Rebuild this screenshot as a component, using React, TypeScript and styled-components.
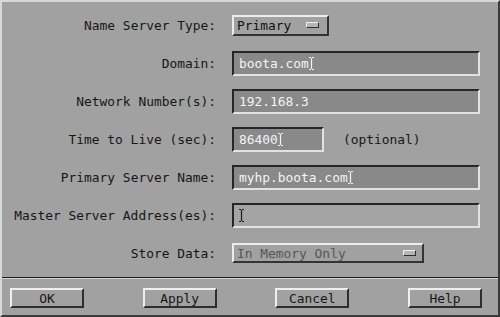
import React from 'react';
import styled, { createGlobalStyle } from 'styled-components';
import type { ReactElement } from 'react';

const GlobalStyle = createGlobalStyle`
  html, body {
    margin: 0;
    padding: 0;
    background: #a1a1a1;
  }
`;

const Window = styled.div`
  box-sizing: border-box;
  width: 500px;
  height: 317px;
  display: flex;
  flex-direction: column;
  background: #a1a1a1;
  border: 2px solid;
  border-color: #d8d8d8 #3a3a3a #3a3a3a #d8d8d8;
  font-family: 'DejaVu Sans Mono', 'Liberation Mono', monospace;
  font-size: 12.9px;
  color: #161616;
`;

const Form = styled.div`
  display: grid;
  grid-template-columns: 208px 1fr;
  grid-auto-rows: 38px;
  column-gap: 16px;
  align-items: center;
  padding: 4px 18px 0 6px;
`;

const Label = styled.div`
  text-align: right;
  white-space: pre;
`;

const FieldCell = styled.div`
  display: flex;
  align-items: center;
  gap: 19px;
`;

const TextField = styled.div<{ $width?: number; $empty?: boolean }>`
  box-sizing: border-box;
  height: 25px;
  width: ${(p) => (p.$width ? `${p.$width}px` : '100%')};
  display: flex;
  align-items: center;
  padding: 0 5px;
  background: ${(p) => (p.$empty ? '#a4a4a4' : '#898989')};
  color: #f4f4f4;
  border: 2px solid;
  border-color: #262626 #e2e2e2 #e2e2e2 #262626;
  white-space: pre;
`;

const Hint = styled.span`
  white-space: pre;
`;

const OptionMenu = styled.div<{ $width: number; $height: number; $disabled?: boolean }>`
  box-sizing: border-box;
  width: ${(p) => p.$width}px;
  height: ${(p) => p.$height}px;
  display: flex;
  align-items: center;
  justify-content: space-between;
  padding: 0 ${(p) => (p.$disabled ? 6 : 8)}px 0 3px;
  border: 2px solid;
  border-color: #ececec #333333 #333333 #ececec;
  color: ${(p) => (p.$disabled ? '#565656' : '#111111')};
  white-space: pre;
`;

const Indicator = styled.span`
  box-sizing: border-box;
  width: 13px;
  height: 6px;
  background: #b4b4b4;
  border: 1px solid;
  border-color: #f0f0f0 #2e2e2e #2e2e2e #f0f0f0;
`;

const Separator = styled.div`
  margin: 5px 0 0;
  height: 1px;
  background: #1e1e1e;
  border-bottom: 1px solid #d4d4d4;
`;

const ButtonRow = styled.div`
  display: flex;
  justify-content: space-between;
  padding: 9px 16px 0 8px;
`;

const Button = styled.div`
  box-sizing: border-box;
  width: 74px;
  height: 20px;
  display: flex;
  align-items: center;
  justify-content: center;
  border: 2px solid;
  border-color: #efefef #2e2e2e #2e2e2e #efefef;
`;

const Caret = ({ color }: { color: string }): ReactElement => (
  <svg width="5" height="13" viewBox="0 0 5 13">
    <path d="M0 0.5h2M3 0.5h2M2.5 1v11M0 12.5h2M3 12.5h2" stroke={color} strokeWidth="1.2" fill="none" />
  </svg>
);

const App = (): ReactElement => (
  <>
    <GlobalStyle />
    <Window>
      <Form>
        <Label>Name Server Type:</Label>
        <FieldCell>
          <OptionMenu $width={97} $height={21}>
            Primary
            <Indicator />
          </OptionMenu>
        </FieldCell>

        <Label>Domain:</Label>
        <FieldCell>
          <TextField>
            boota.com
            <Caret color="#f4f4f4" />
          </TextField>
        </FieldCell>

        <Label>Network Number(s):</Label>
        <FieldCell>
          <TextField>192.168.3</TextField>
        </FieldCell>

        <Label>Time to Live (sec):</Label>
        <FieldCell>
          <TextField $width={92}>
            86400
            <Caret color="#f4f4f4" />
          </TextField>
          <Hint>(optional)</Hint>
        </FieldCell>

        <Label>Primary Server Name:</Label>
        <FieldCell>
          <TextField>
            myhp.boota.com
            <Caret color="#f4f4f4" />
          </TextField>
        </FieldCell>

        <Label>Master Server Address(es):</Label>
        <FieldCell>
          <TextField $empty>
            <Caret color="#1a1a1a" />
          </TextField>
        </FieldCell>

        <Label>Store Data:</Label>
        <FieldCell>
          <OptionMenu $width={192} $height={20} $disabled>
            In Memory Only
            <Indicator />
          </OptionMenu>
        </FieldCell>
      </Form>

      <Separator />

      <ButtonRow>
        <Button>OK</Button>
        <Button>Apply</Button>
        <Button>Cancel</Button>
        <Button>Help</Button>
      </ButtonRow>
    </Window>
  </>
);

export default App;
